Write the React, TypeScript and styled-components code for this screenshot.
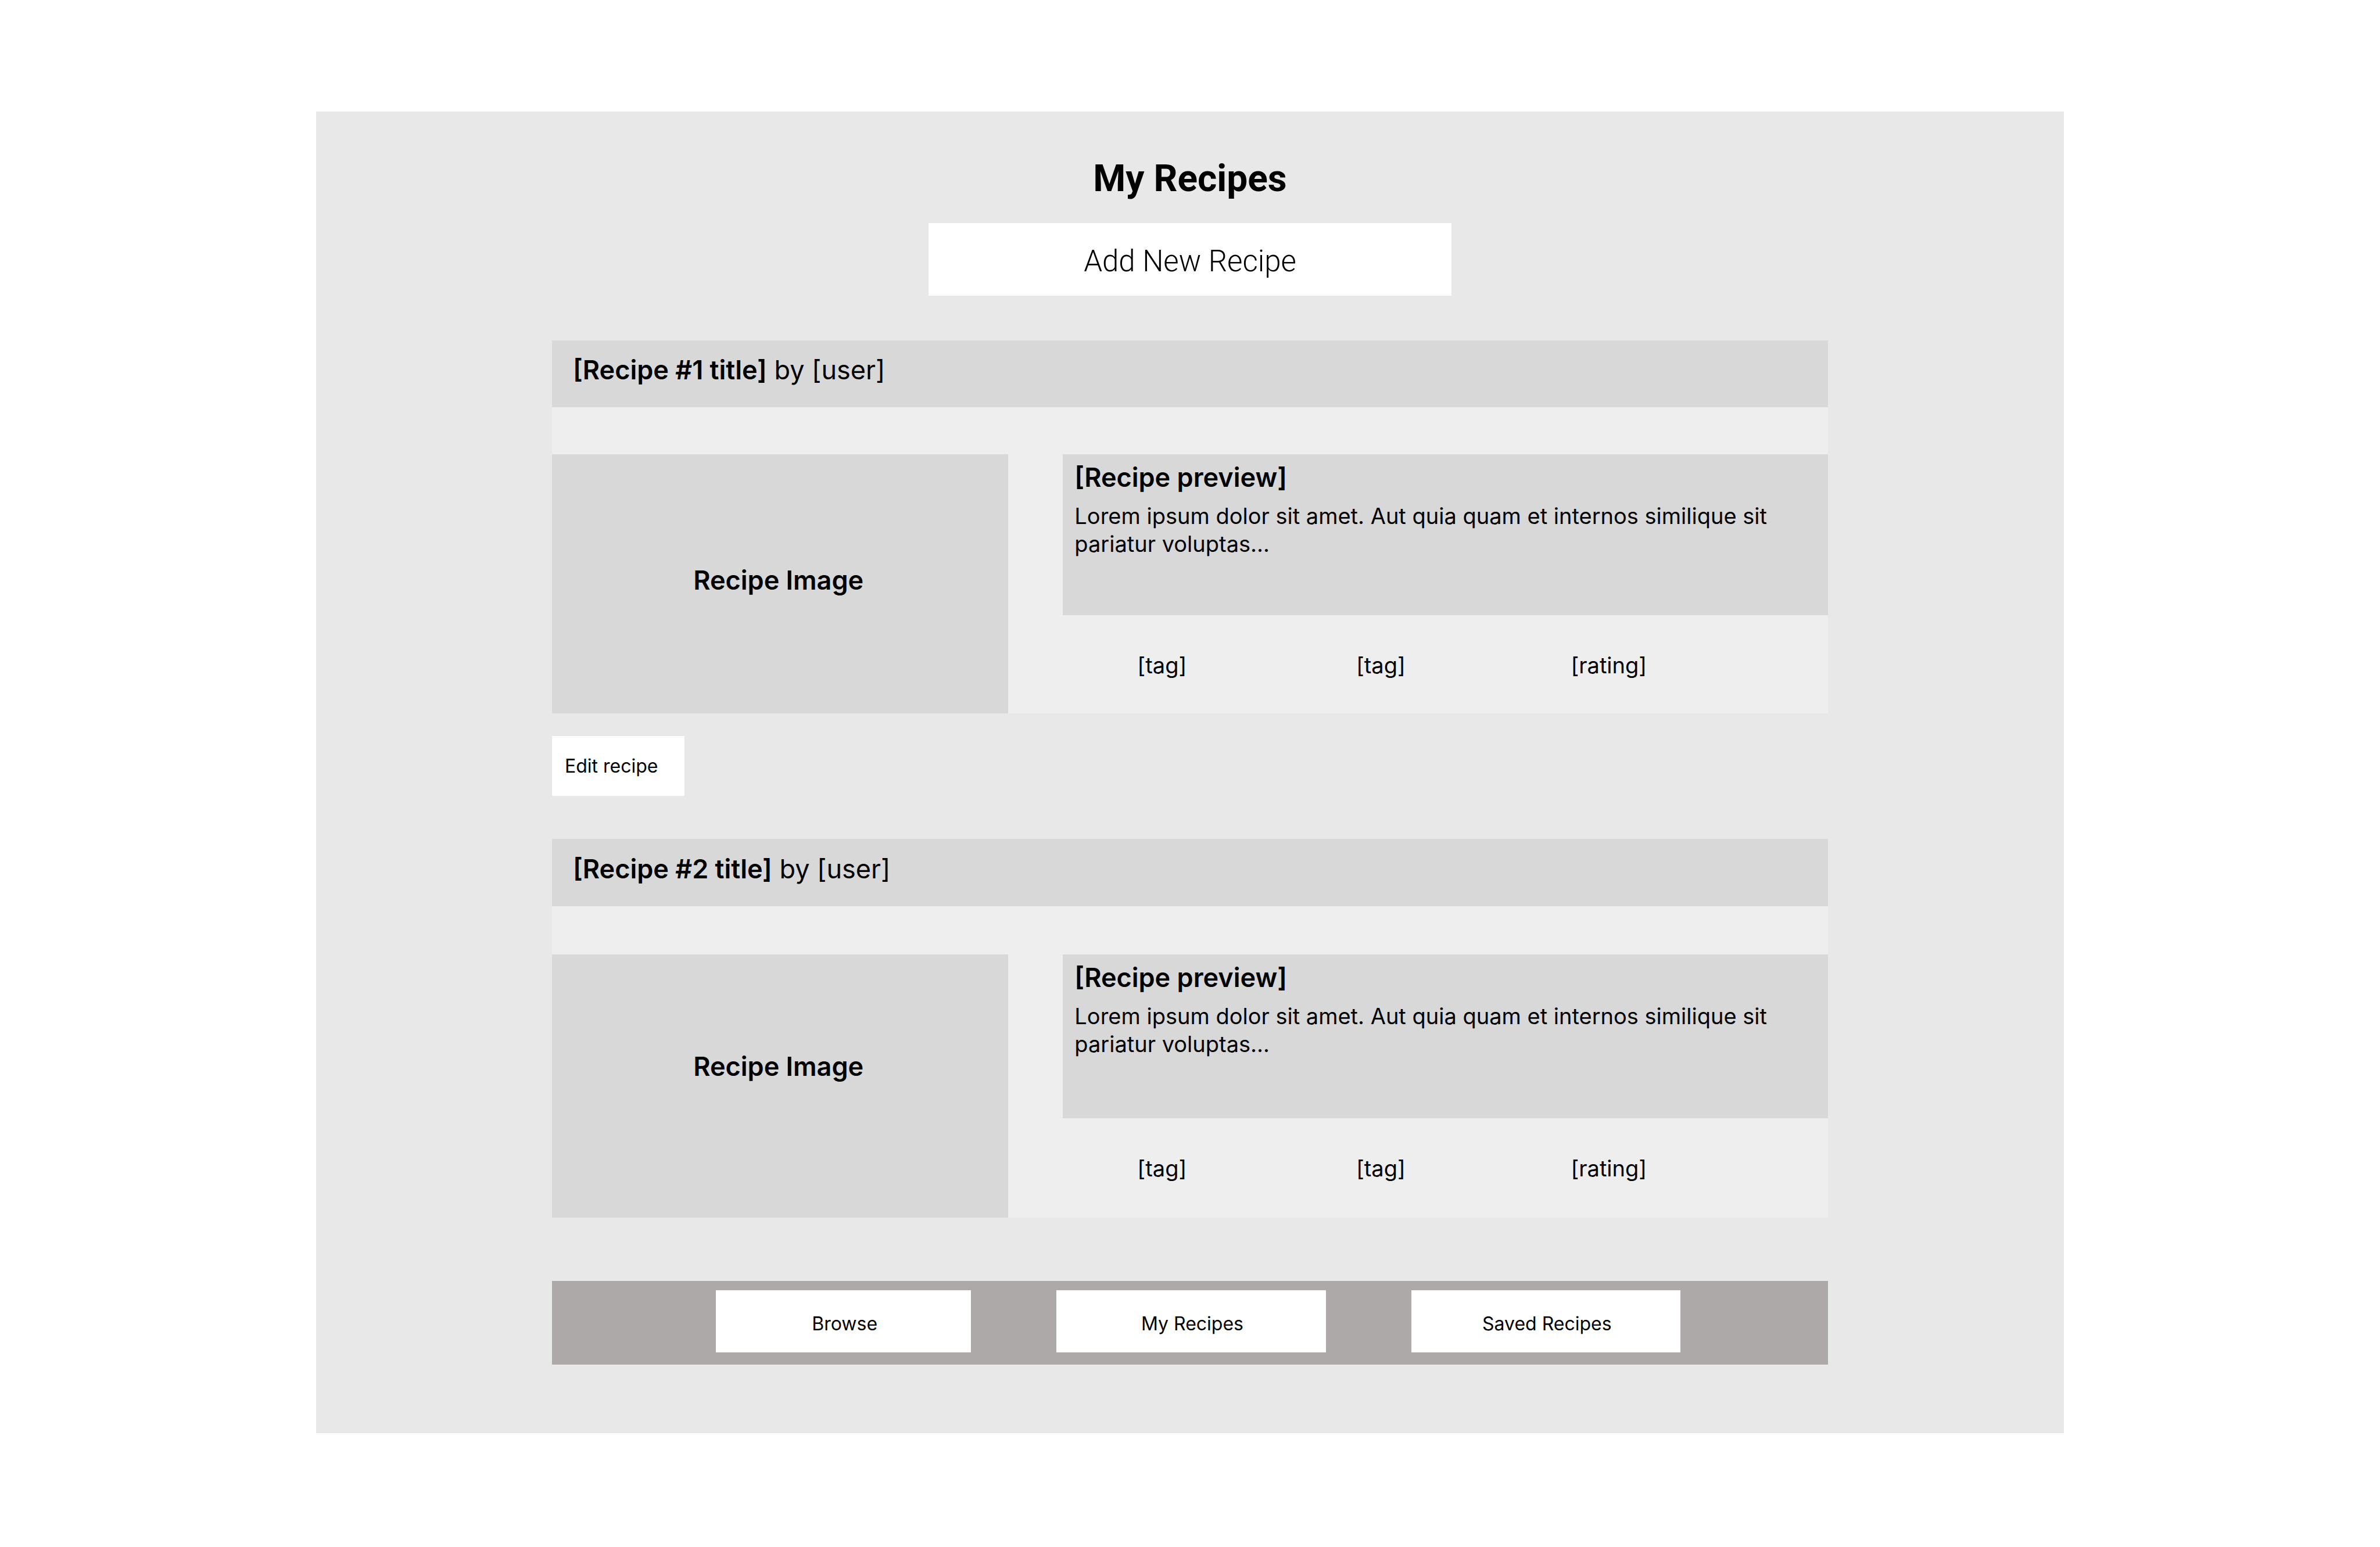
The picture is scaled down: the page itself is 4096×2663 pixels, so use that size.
import React from "react";
import styled, { createGlobalStyle } from "styled-components";

const GlobalStyle = createGlobalStyle`
  *, *::before, *::after { box-sizing: border-box; }
  body {
    margin: 0;
    background: #ffffff;
    color: #000000;
    font-family: Inter, "Liberation Sans", sans-serif;
  }
  h1, h2, h3, p, ul { margin: 0; padding: 0; }
`;

const Page = styled.div`
  padding: 192px 544px;
`;

const Panel = styled.main`
  display: flex;
  flex-direction: column;
  padding: 78px 406px 118px;
  background: #e8e8e8;
`;

const PageTitle = styled.h1`
  font: 700 64px/76px Roboto, "Liberation Sans", sans-serif;
  text-align: center;
`;

const Button = styled.button`
  border: 0;
  border-radius: 0;
  background: #ffffff;
  color: inherit;
  font: 400 32px/40px Inter, "Liberation Sans", sans-serif;
  cursor: pointer;
`;

const AddButton = styled(Button)`
  align-self: center;
  width: 900px;
  max-width: 100%;
  margin: 38px 0 77px;
  padding: 36px 24px 29px;
  font: 300 51px/60px Roboto, "Liberation Sans", sans-serif;
`;

const EditButton = styled(Button)`
  align-self: flex-start;
  width: 228px;
  margin: 39px 0 74px;
  padding: 32px 22px 31px;
  text-align: left;
`;

const Card = styled.article`
  display: flex;
  flex-direction: column;
  background: #eeeeee;
`;

const CardHeader = styled.header<{ $roomy: boolean }>`
  padding: ${(p) => (p.$roomy ? "24px 36px 36px" : "23px 36px 36px")};
  background: #d8d8d8;
  font-size: 45px;
  line-height: 56px;
`;

const CardTitle = styled.h2`
  display: inline;
  font-size: inherit;
  font-weight: 600;
`;

const CardBody = styled.div<{ $roomy: boolean }>`
  display: grid;
  grid-template-columns: 785fr 1316fr;
  column-gap: 94px;
  min-height: ${(p) => (p.$roomy ? 453 : 446)}px;
  margin-top: ${(p) => (p.$roomy ? 83 : 81)}px;
`;

const ImagePlaceholder = styled.div<{ $roomy: boolean }>`
  display: flex;
  align-items: center;
  justify-content: center;
  padding: 0 6px ${(p) => (p.$roomy ? 68 : 12)}px 0;
  background: #d8d8d8;
  font-size: 45px;
  font-weight: 600;
  line-height: 56px;
`;

const Details = styled.div`
  display: flex;
  flex-direction: column;
`;

const Preview = styled.section<{ $roomy: boolean }>`
  min-height: ${(p) => (p.$roomy ? 282 : 277)}px;
  padding: 12px 20px;
  background: #d8d8d8;
`;

const PreviewTitle = styled.h3`
  font-size: 45px;
  font-weight: 600;
  line-height: 56px;
`;

const PreviewText = styled.p`
  margin-top: 14px;
  font-size: 38px;
  line-height: 48px;
`;

const TagList = styled.ul`
  display: grid;
  grid-template-columns: 376fr 369fr 442fr;
  padding: 62px 0 0 128px;
  list-style: none;
  font-size: 38px;
  line-height: 48px;
`;

const NavBar = styled.nav`
  display: grid;
  grid-template-columns: 439fr 463fr 463fr;
  column-gap: 147px;
  margin-top: 109px;
  padding: 16px 254px 21px 282px;
  background: #ada9a8;
`;

const NavButton = styled(Button)`
  padding: 38px 10px 29px 14px;
`;

type Recipe = { title: string; user: string; roomy: boolean; editable: boolean };

const recipes: Recipe[] = [
  { title: "[Recipe #1 title]", user: "[user]", roomy: false, editable: true },
  { title: "[Recipe #2 title]", user: "[user]", roomy: true, editable: false },
];

const tags = ["[tag]", "[tag]", "[rating]"];
const destinations = ["Browse", "My Recipes", "Saved Recipes"];

function RecipeCard({ title, user, roomy }: Recipe) {
  return (
    <Card>
      <CardHeader $roomy={roomy}>
        <CardTitle>{title}</CardTitle> by {user}
      </CardHeader>
      <CardBody $roomy={roomy}>
        <ImagePlaceholder $roomy={roomy}>Recipe Image</ImagePlaceholder>
        <Details>
          <Preview $roomy={roomy}>
            <PreviewTitle>[Recipe preview]</PreviewTitle>
            <PreviewText>
              Lorem ipsum dolor sit amet. Aut quia quam et internos similique sit pariatur voluptas...
            </PreviewText>
          </Preview>
          <TagList>
            {tags.map((tag, i) => (
              <li key={i}>{tag}</li>
            ))}
          </TagList>
        </Details>
      </CardBody>
    </Card>
  );
}

export default function App() {
  return (
    <Page>
      <GlobalStyle />
      <Panel>
        <PageTitle>My Recipes</PageTitle>
        <AddButton type="button">Add New Recipe</AddButton>
        {recipes.map((recipe) => (
          <React.Fragment key={recipe.title}>
            <RecipeCard {...recipe} />
            {recipe.editable && <EditButton type="button">Edit recipe</EditButton>}
          </React.Fragment>
        ))}
        <NavBar>
          {destinations.map((name) => (
            <NavButton type="button" key={name}>
              {name}
            </NavButton>
          ))}
        </NavBar>
      </Panel>
    </Page>
  );
}
